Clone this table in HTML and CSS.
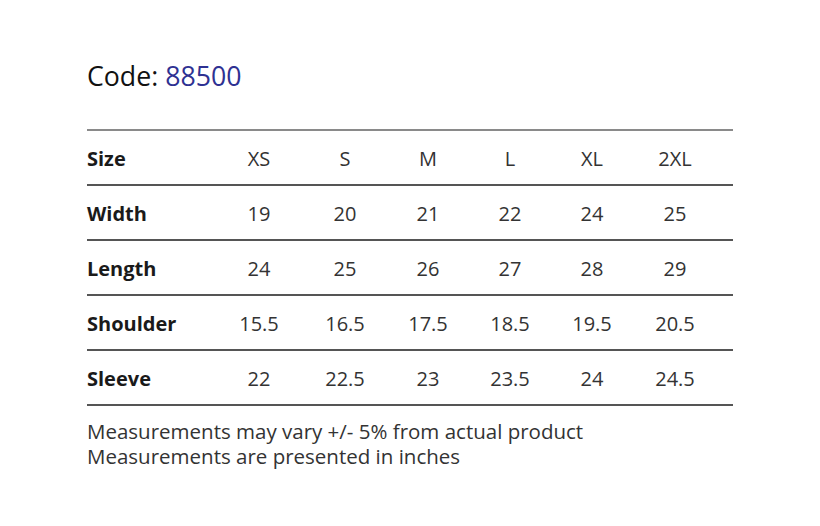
FILE: index.html
```html
<!DOCTYPE html>
<html>
<head>
<meta charset="utf-8">
<link rel="stylesheet" href="styles.css">
</head>
<body>
<div class="page">
  <h1 class="title">Code: <span class="code">88500</span></h1>
  <div class="table">
    <div class="row head">
      <div class="label">Size</div><div class="cell">XS</div><div class="cell">S</div><div class="cell">M</div><div class="cell">L</div><div class="cell">XL</div><div class="cell">2XL</div>
    </div>
    <div class="row">
      <div class="label">Width</div><div class="cell">19</div><div class="cell">20</div><div class="cell">21</div><div class="cell">22</div><div class="cell">24</div><div class="cell">25</div>
    </div>
    <div class="row">
      <div class="label">Length</div><div class="cell">24</div><div class="cell">25</div><div class="cell">26</div><div class="cell">27</div><div class="cell">28</div><div class="cell">29</div>
    </div>
    <div class="row">
      <div class="label">Shoulder</div><div class="cell">15.5</div><div class="cell">16.5</div><div class="cell">17.5</div><div class="cell">18.5</div><div class="cell">19.5</div><div class="cell">20.5</div>
    </div>
    <div class="row">
      <div class="label">Sleeve</div><div class="cell">22</div><div class="cell">22.5</div><div class="cell">23</div><div class="cell">23.5</div><div class="cell">24</div><div class="cell">24.5</div>
    </div>
  </div>
  <div class="notes">
    <p>Measurements may vary +/- 5% from actual product</p>
    <p>Measurements are presented in inches</p>
  </div>
</div>
</body>
</html>
```
FILE: styles.css
```css
html, body {
  margin: 0;
  padding: 0;
  background: #ffffff;
}
body {
  font-family: "Open Sans", "Liberation Sans", sans-serif;
  color: #1a1a1a;
}
.page {
  width: 646px;
  padding: 57px 0 0 87px;
}
.title {
  margin: 0;
  font-size: 26.7px;
  font-weight: 400;
  line-height: 37px;
  color: #111;
}
.code {
  color: #2e3192;
}
.table {
  margin-top: 35px;
  border-top: 2px solid #8a8a8a;
}
.row {
  display: grid;
  grid-template-columns: 128px 88px 84px 82px 82px 82px 84px 1fr;
  height: 53px;
  align-items: start;
  border-bottom: 2px solid #555;
  font-size: 20px;
  line-height: 27px;
}
.row > div {
  padding-top: 14px;
}
.label {
  font-weight: 700;
  color: #1a1a1a;
}
.cell {
  text-align: center;
  color: #333;
}
.notes {
  padding-top: 13px;
  font-size: 20.5px;
  line-height: 25px;
  color: #333;
}
.notes p {
  margin: 0;
}
```
